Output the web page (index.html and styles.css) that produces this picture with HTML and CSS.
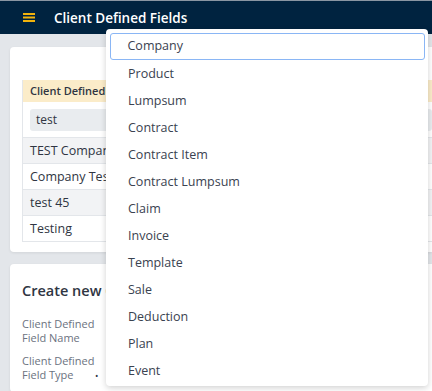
FILE: index.html
```html
<!DOCTYPE html>
<html lang="en">
<head>
    <meta charset="UTF-8">
    <title>Client Defined Fields</title>
    <link rel="stylesheet" href="styles.css">
</head>
<body>
    <div class="topbar">
        <svg class="menu-icon" width="12" height="9" viewBox="0 0 12 9">
            <rect x="0" y="0" width="12" height="2" fill="#f2b30c"/>
            <rect x="0" y="3.5" width="12" height="2" fill="#f2b30c"/>
            <rect x="0" y="7" width="12" height="2" fill="#f2b30c"/>
        </svg>
        <h1>Client Defined Fields</h1>
    </div>

    <div class="content">
        <div class="card list-card">
            <div class="table">
                <div class="table-head">Client Defined Field Name</div>
                <div class="filter-row">
                    <div class="filter-input">test</div>
                </div>
                <div class="row odd">TEST Company field</div>
                <div class="row">Company Test field</div>
                <div class="row odd">test 45</div>
                <div class="row">Testing</div>
            </div>
        </div>

        <div class="card form-card">
            <h2>Create new Client Defined Field</h2>
            <div class="form-row">
                <label>Client Defined<br>Field Name</label>
            </div>
            <div class="form-row">
                <label>Client Defined<br>Field Type</label>
                <span class="required">&bull;</span>
            </div>
        </div>
    </div>

    <ul class="dropdown">
        <li class="active">Company</li>
        <li>Product</li>
        <li>Lumpsum</li>
        <li>Contract</li>
        <li>Contract Item</li>
        <li>Contract Lumpsum</li>
        <li>Claim</li>
        <li>Invoice</li>
        <li>Template</li>
        <li>Sale</li>
        <li>Deduction</li>
        <li>Plan</li>
        <li>Event</li>
    </ul>
</body>
</html>
```

FILE: styles.css
```css
* {
    box-sizing: border-box;
    font-family: 'Open Sans', 'Noto Sans', sans-serif;
}

html {
    overflow: hidden;
}

body {
    margin: 0;
    background-color: #e3e6ea;
    overflow: hidden;
    width: 432px;
    height: 391px;
    position: relative;
}

.topbar {
    height: 34px;
    background-color: #002340;
    border-top: 1px solid #8a96a3;
    display: flex;
    align-items: center;
    padding-left: 23px;
}

.menu-icon {
    margin-right: 19px;
}

.topbar h1 {
    margin: 0;
    color: #ffffff;
    font-size: 13.5px;
    font-weight: 600;
    white-space: nowrap;
}

.content {
    padding: 13px 0 0 10px;
    width: 432px;
}

.card {
    background-color: #ffffff;
    border-radius: 4px 0 0 4px;
    box-shadow: 0 1px 3px rgba(0, 0, 0, 0.08);
    overflow: hidden;
}

.list-card {
    padding: 33px 0 10px 12px;
    margin-bottom: 12px;
}

.table {
    border-left: 1px solid #e3e6ea;
    white-space: nowrap;
}

.table-head {
    height: 22px;
    background-color: #fbecc9;
    padding-left: 7px;
    font-size: 11px;
    font-weight: 600;
    color: #2f3542;
    line-height: 22px;
}

.filter-row {
    padding: 7px 0 6px 7px;
    border-bottom: 1px solid #e3e6ea;
}

.filter-input {
    height: 22px;
    background-color: #e9ecef;
    border-radius: 3px;
    padding-left: 6px;
    font-size: 12px;
    line-height: 22px;
    color: #2f3542;
}

.row {
    height: 26px;
    line-height: 25px;
    padding-left: 7px;
    font-size: 12.5px;
    color: #2f3542;
    border-bottom: 1px solid #e3e6ea;
}

.row.odd {
    background-color: #f2f3f5;
}

.form-card {
    padding: 17px 12px 0 12px;
    height: 128px;
}

.form-card h2 {
    margin: 0 0 17px 0;
    font-size: 14.5px;
    font-weight: 600;
    color: #2f3542;
    white-space: nowrap;
}

.form-row {
    display: flex;
    align-items: flex-end;
    margin-bottom: 9px;
}

.form-row label {
    font-size: 11px;
    line-height: 14px;
    color: #6b7280;
    width: 73px;
    white-space: nowrap;
}

.required {
    font-size: 9px;
    color: #2f3542;
    line-height: 10px;
    margin-bottom: 1px;
}

.dropdown {
    position: absolute;
    left: 106px;
    top: 29px;
    width: 322px;
    height: 357px;
    margin: 0;
    padding: 4px 3px 2px 4px;
    list-style: none;
    background-color: #ffffff;
    border-radius: 4px;
    box-shadow: 0 2px 6px rgba(0, 0, 0, 0.18);
}

.dropdown li {
    height: 27px;
    line-height: 27px;
    padding-left: 18px;
    font-size: 12.5px;
    color: #3a4250;
}

.dropdown li.active {
    border: 1.5px solid #8ab6f5;
    border-radius: 3px;
    line-height: 24px;
    padding-left: 16.5px;
}
```
